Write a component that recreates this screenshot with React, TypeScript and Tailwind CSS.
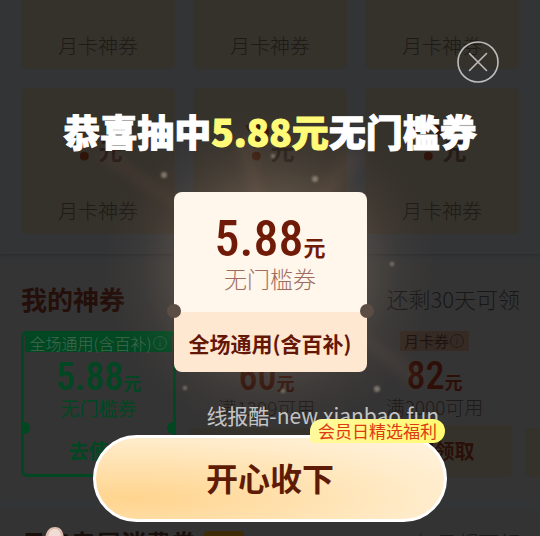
import React from "react";

const cjk = "font-['Noto_Sans_CJK_SC',sans-serif]";
const digits = "font-['Roboto_Condensed',Roboto,sans-serif] font-medium";

const prizes = ["月卡神券", "月卡神券", "月卡神券", "月卡神券", "月卡神券", "月卡神券"];

const InfoIcon: React.FC = () => (
  <svg className="w-4 h-4 opacity-60" viewBox="0 0 16 16" fill="none" stroke="currentColor">
    <circle cx="8" cy="8" r="6.5" />
    <path d="M8 7v4.5M8 4.5v1.2" />
  </svg>
);

const PrizeCell: React.FC<{ label: string }> = ({ label }) => (
  <div className="h-[146px] rounded-md bg-[#35312b] flex flex-col items-center justify-end pb-2">
    <div className="flex items-baseline h-[86px] text-[#2b1710]">
      <span className="text-[52px] leading-[60px] font-bold font-['Noto_Sans',sans-serif] text-[#2f1509]">?</span>
      <span className="text-2xl font-bold text-[#241b16]">元</span>
    </div>
    <p className="text-xl leading-[30px] font-light text-[#1d1b17]">{label}</p>
  </div>
);

type CouponProps = {
  tag?: string;
  amount?: string;
  desc?: string;
  action?: string;
};

const Coupon: React.FC<CouponProps> = ({ tag, amount, desc, action }) => (
  <div className="w-[155px] h-[146px] shrink-0 rounded-md overflow-hidden bg-[#353434] flex flex-col items-center">
    <div className="h-[21px] flex items-center">
      {tag && (
        <span className="flex items-center px-1 bg-[#362b24] text-[15px] leading-5 text-[#1c1310]">
          {tag}
          <InfoIcon />
        </span>
      )}
    </div>
    <p className="h-11 flex items-baseline text-[#2e0f08] font-bold">
      <span className={`text-[38px] leading-[50px] ${digits}`}>{amount}</span>
      <span className="text-lg">{amount && "元"}</span>
    </p>
    <p className="h-8 text-[19px] leading-6 font-light text-[#1f1a18]">{desc}</p>
    <div className="flex-1 w-full bg-[#35322c] text-center">
      {action && (
        <button className="text-xl leading-[52px] font-bold text-[#2a0f08]">{action}</button>
      )}
    </div>
  </div>
);

const ActiveCoupon: React.FC = () => (
  <div className="relative w-[155px] h-[146px] shrink-0 rounded-md overflow-hidden border-[3px] border-[#004722] flex flex-col items-center text-[#004722]">
    <div className="h-[18px] px-1 flex items-center justify-center bg-[#004722] text-[#45684f] text-[16px] font-light whitespace-nowrap">
      全场通用(含百补)
      <InfoIcon />
    </div>
    <p className="h-11 flex items-baseline font-bold">
      <span className={`text-[38px] leading-[50px] ${digits}`}>5.88</span>
      <span className="text-lg">元</span>
    </p>
    <p className="h-8 text-[19px] leading-6">无门槛券</p>
    <button className="text-xl leading-[46px] font-bold">去使用</button>
    <span className="absolute -left-1.5 top-[88px] w-3 h-3 rounded-full bg-[#004722]" />
    <span className="absolute -right-1.5 top-[88px] w-3 h-3 rounded-full bg-[#004722]" />
  </div>
);

const Background: React.FC = () => (
  <div className="w-full">
    {/* prize board, scrolled partly out of view */}
    <section className="-mt-[77px] px-[21px] pb-5 grid grid-cols-3 gap-x-[18px] gap-y-[19px] shadow-[0_1px_3px_#2b2b2b]">
      {prizes.map((label, i) => (
        <PrizeCell key={i} label={label} />
      ))}
    </section>

    {/* my coupons */}
    <section className="mt-2 pl-[21px] rounded-lg bg-[#343434] pb-6">
      <div className="flex items-center justify-between pr-5 h-[69px] pt-1">
        <h2 className="text-[26px] font-bold text-[#240f0a]">我的神券</h2>
        <span className="text-[22px] font-light text-[#181818]">还剩30天可领</span>
      </div>
      <div className="flex gap-[13px] overflow-hidden">
        <ActiveCoupon />
        <Coupon amount="60" desc="满1299可用" />
        <Coupon tag="月卡券" amount="82" desc="满2000可用" action="立即领取" />
        <Coupon />
      </div>
    </section>

    {/* member coupons */}
    <section className="mt-2 pl-[21px] pr-5 h-[68px] flex items-center justify-between bg-[#333333]">
      <div className="flex items-center gap-2">
        <h2 className="text-[25px] font-bold text-[#190f0c]">月卡专属消费券</h2>
        <span className="w-10 h-6 rounded-sm bg-[#3f2c06]" />
      </div>
      <span className="text-[21px] font-light text-[#1c1c1c]">每日都可领</span>
    </section>
  </div>
);

const Glow: React.FC = () => (
  <svg
    className="absolute left-1/2 top-0 -translate-x-1/2 w-[540px] h-[536px] pointer-events-none"
    viewBox="0 0 540 536"
    aria-hidden="true"
  >
    <defs>
      <radialGradient id="glow">
        <stop offset="0" stopColor="#e0b088" stopOpacity="0.42" />
        <stop offset="0.45" stopColor="#c8a488" stopOpacity="0.26" />
        <stop offset="0.75" stopColor="#a08870" stopOpacity="0.08" />
        <stop offset="1" stopColor="#806050" stopOpacity="0" />
      </radialGradient>
      <filter id="soft">
        <feGaussianBlur stdDeviation="6" />
      </filter>
      <filter id="spark">
        <feGaussianBlur stdDeviation="1" />
      </filter>
    </defs>
    <ellipse cx="270" cy="270" rx="170" ry="165" fill="url(#glow)" />
    <g filter="url(#soft)" fill="#c88868" fillOpacity="0.08">
      <path d="M270 270 96 156l14-6Z" />
      <path d="M270 270 236 140l18-4Z" />
      <path d="M270 270 346 148l20 8Z" />
      <path d="M270 270 425 375l-12 10Z" />
    </g>
    <g filter="url(#spark)" fill="#c8b8a4" fillOpacity="0.5">
      <circle cx="164" cy="175" r="3" />
      <circle cx="315" cy="179" r="3" />
      <circle cx="273" cy="156" r="2" />
      <circle cx="392" cy="264" r="2" />
      <circle cx="377" cy="389" r="3" />
      <circle cx="185" cy="388" r="2" />
      <circle cx="283" cy="391" r="2" />
    </g>
  </svg>
);

const Ticket: React.FC = () => (
  <div className="relative w-[193px] text-center text-[#701a08]">
    <div className="h-[120px] rounded-t-lg bg-[#fff6ec] pt-5">
      <p className="flex items-baseline justify-center font-bold">
        <span className={`text-[50px] leading-[54px] ${digits}`}>5.88</span>
        <span className="text-[22px] leading-6">元</span>
      </p>
      <p className="text-[23px] leading-6 font-light text-[#a06c5c]">无门槛券</p>
    </div>
    <div className="h-[60px] rounded-b-lg bg-[#ffe8d1]">
      <p className="text-[21px] leading-[62px] font-bold text-[#651707]">全场通用(含百补)</p>
    </div>
    <span className="absolute -left-[7px] top-[112px] w-3.5 h-3.5 rounded-full bg-[#5b4d44]" />
    <span className="absolute -right-[7px] top-[112px] w-3.5 h-3.5 rounded-full bg-[#5b4d44]" />
  </div>
);

const Dialog: React.FC = () => (
  <div className="absolute inset-0 flex flex-col items-center" role="dialog" aria-label="恭喜抽中5.88元无门槛券">
    <Glow />
    <div className="relative w-full flex justify-end pt-[41px] pr-[41px]">
      <button aria-label="关闭" className="w-[42px] h-[42px] text-[#bdbdbd]">
        <svg viewBox="0 0 42 42" fill="none" stroke="currentColor" strokeWidth="1.6" strokeLinecap="round">
          <circle cx="21" cy="21" r="20" />
          <path d="M12.5 12.5 29.5 29.5M29.5 12.5 12.5 29.5" />
        </svg>
      </button>
    </div>
    <h1 className="relative mt-5 text-[37px] leading-[56px] font-black text-white whitespace-nowrap [-webkit-text-stroke:1px_currentColor]">
      恭喜抽中<span className="text-[#fffb78]">5.88元</span>无门槛券
    </h1>
    <div className="relative mt-[33px]">
      <Ticket />
    </div>
    <p className="relative w-full mt-[31px] pr-[101px] text-right text-[21px] leading-6 text-[#c4c4c4]">
      线报酷-new.xianbao.fun
    </p>
    <div className="relative w-full mt-2 px-[93px]">
      <button className="w-full h-[87px] pb-1 rounded-full border-[3px] border-white bg-[radial-gradient(ellipse_at_10%_75%,#ffd48e_0%,#ffe0ac_35%,#ffebc8_65%,#fff4e2_100%)] text-[32px] font-bold text-[#5e1c06]">
        开心收下
      </button>
      <span className="absolute right-[95px] -top-4 px-2 h-6 rounded-[12px] rounded-bl-sm bg-gradient-to-r from-[#fff99c] to-[#fffa70] text-[17px] leading-6 text-[#de3a14]">
        会员日精选福利
      </span>
    </div>
    {/* pointing finger */}
    <svg className="absolute left-11 top-[527px] w-6 h-10" viewBox="0 0 24 40" aria-hidden="true">
      <path d="M1 14C1 5 5 0 11 0s9 5 9 14v26H1Z" fill="#dcbdb0" />
      <path d="M4 14C4 6 6 2 11 2s6 5 6 12Z" fill="#f1ddd5" />
    </svg>
  </div>
);

const App: React.FC = () => {
  return (
    <div className={`relative h-screen overflow-hidden bg-[#333436] ${cjk}`}>
      <Background />
      <Dialog />
    </div>
  );
};

export default App;
